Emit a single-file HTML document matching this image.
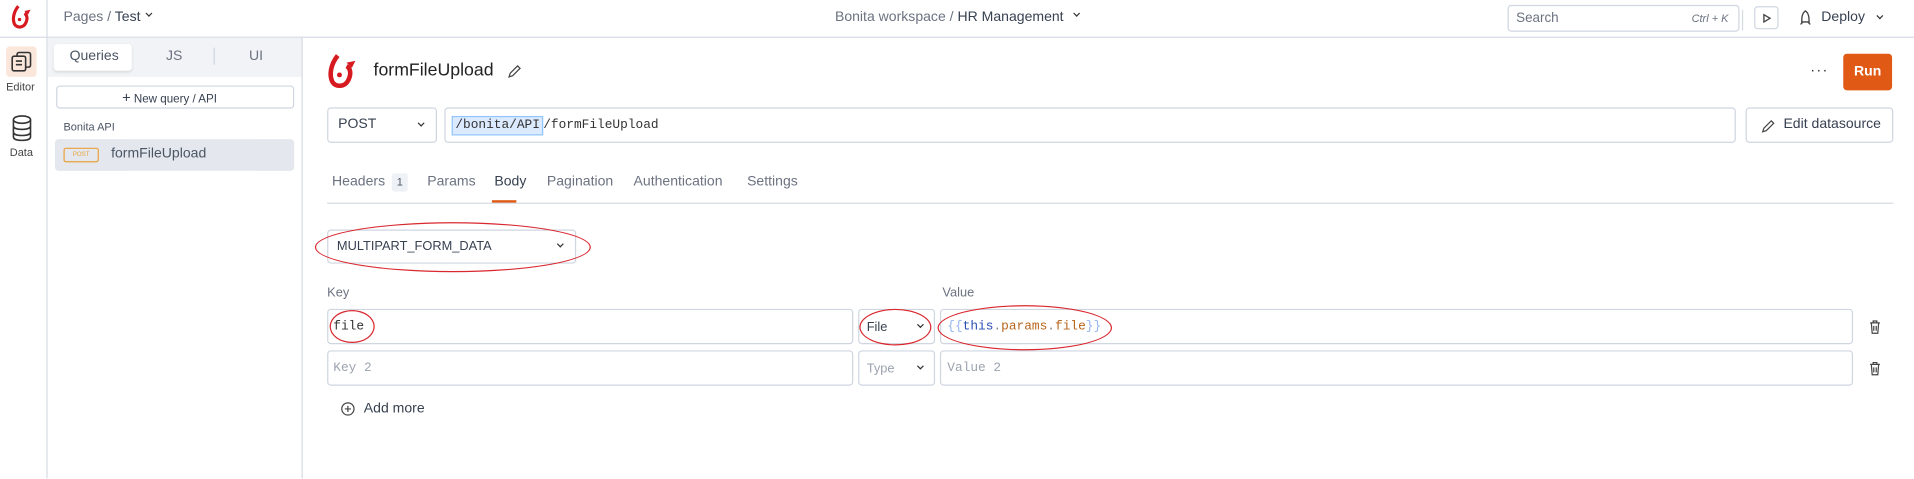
<!DOCTYPE html>
<html><head><meta charset="utf-8"><style>
*{box-sizing:border-box;margin:0;padding:0}
html,body{width:1914px;height:478px;overflow:hidden;background:#fff}
#s{position:absolute;left:0;top:0;width:1568px;height:392px;transform:scale(1.2207);transform-origin:0 0;font-family:"Liberation Sans",sans-serif;color:#4b5563;font-size:11px}
.a{position:absolute}
.box{position:absolute;border:1px solid #cfd6e0;border-radius:3px;background:#fff}
.mono{font-family:"Liberation Mono",monospace}
.ell{position:absolute;border:1px solid #d9282f;border-radius:50%}
.chev{position:absolute;width:5px;height:5px;border-right:1.3px solid #333;border-bottom:1.3px solid #333;transform:rotate(45deg)}
</style></head><body><div id="s">
<div class="a" style="left:0;top:30px;width:1568px;height:1px;background:#d5dbe3"></div>
<div class="a" style="left:38px;top:0;width:1px;height:392px;background:#d5dbe3"></div>
<svg class="a" style="left:9px;top:4px" width="18" height="20" viewBox="0 0 18 20"><path d="M6 1 C2 6 1 12 3 16 C5 19 10 19 12 15 C14 11 13 8 11 7" fill="none" stroke="#d71920" stroke-width="2.6"/><circle cx="7" cy="12" r="1.4" fill="#d71920"/><path d="M11 5 L16 4 L14 8" fill="#d71920"/></svg>
<div class="a" style="left:52px;top:8px;font-size:11.5px;color:#6b7280">Pages / <span style="color:#374151">Test</span></div>
<div class="chev" style="left:120px;top:9px;width:4px;height:4px"></div>
<div class="a" style="left:684px;top:8px;font-size:11.5px;color:#6b7280">Bonita workspace / <span style="color:#374151">HR Management</span></div>
<div class="chev" style="left:880px;top:9px;width:4px;height:4px"></div>
<div class="box" style="left:1235px;top:4px;width:190px;height:22px;border-radius:3px"><span class="a" style="left:6px;top:4px;font-size:11px;color:#6b7280">Search</span><span class="a" style="right:8px;top:5px;font-size:9px;font-style:italic;color:#6b7280">Ctrl + K</span></div>
<div class="a" style="left:1427px;top:8px;width:1px;height:17px;background:#d5dbe3"></div>
<div class="box" style="left:1437px;top:5px;width:20px;height:19px"><svg class="a" style="left:6px;top:5px" width="7" height="8"><path d="M1 1 L6 4 L1 7Z" fill="none" stroke="#444" stroke-width="1.1"/></svg></div>
<svg class="a" style="left:1473px;top:8px" width="12" height="13"><path d="M6 1 C3 3 3 7 3 10 L9 10 C9 7 9 3 6 1Z M2 12 L4 10 M10 12 L8 10" fill="none" stroke="#444" stroke-width="1.1"/></svg>
<div class="a" style="left:1492px;top:8px;color:#374151;font-size:11.5px">Deploy</div>
<div class="chev" style="left:1538px;top:11px;width:4px;height:4px"></div>
<div class="a" style="left:5px;top:38px;width:25px;height:25px;background:#fbe6dc;border-radius:3px"></div>
<svg class="a" style="left:9px;top:42px" width="18" height="18" viewBox="0 0 18 18" fill="none" stroke="#333" stroke-width="1.3"><rect x="5" y="1" width="11" height="12" rx="1.5"/><rect x="1" y="4" width="11" height="12" rx="1.5" fill="#fbe6dc"/><path d="M4 8h5M4 11h5"/></svg>
<div class="a" style="left:5px;top:66px;font-size:9px;color:#444">Editor</div>
<svg class="a" style="left:9px;top:94px" width="18" height="22" viewBox="0 0 18 22" fill="none" stroke="#333" stroke-width="1.3"><ellipse cx="9" cy="4" rx="7" ry="3"/><path d="M2 4v14c0 2 3 3 7 3s7-1 7-3V4M2 9c0 2 3 3 7 3s7-1 7-3M2 14c0 2 3 3 7 3s7-1 7-3"/></svg>
<div class="a" style="left:8px;top:120px;font-size:9px;color:#444">Data</div>
<div class="a" style="left:39px;top:31px;width:208px;height:32px;background:#f1f3f6"></div>
<div class="a" style="left:247px;top:31px;width:1px;height:361px;background:#d5dbe3"></div>
<div class="a" style="left:44px;top:36px;width:64px;height:22px;background:#fff;border-radius:3px;box-shadow:0 1px 2px rgba(0,0,0,.1)"></div>
<div class="a" style="left:57px;top:40px;font-size:11.5px;color:#4b5563">Queries</div>
<div class="a" style="left:136px;top:40px;font-size:11.5px;color:#6b7280">JS</div>
<div class="a" style="left:175px;top:39px;width:1px;height:14px;background:#cfd6e0"></div>
<div class="a" style="left:204px;top:40px;font-size:11.5px;color:#6b7280">UI</div>
<div class="box" style="left:46px;top:70px;width:195px;height:19px"></div>
<div class="a" style="left:100px;top:73px;font-size:9.5px;color:#374151"><b style="font-size:12px;font-weight:normal">+</b> New query / API</div>
<div class="a" style="left:52px;top:99px;font-size:9px;color:#4b5563">Bonita API</div>
<div class="a" style="left:45px;top:114px;width:196px;height:26px;background:#e4e8ee;border-radius:3px"></div>
<div class="a" style="left:52px;top:121px;width:29px;height:12px;border:1px solid #e8a23c;border-radius:2px;font-size:5px;color:#e8a23c;text-align:center;line-height:10px">POST</div>
<div class="a" style="left:91px;top:120px;font-size:11.5px;color:#4b5563">formFileUpload</div>
<svg class="a" style="left:268px;top:44px" width="26" height="29" viewBox="0 0 18 20"><path d="M6 1 C2 6 1 12 3 16 C5 19 10 19 12 15 C14 11 13 8 11 7" fill="none" stroke="#d71920" stroke-width="2.6"/><circle cx="7" cy="12" r="1.4" fill="#d71920"/><path d="M11 5 L16 4 L14 8" fill="#d71920"/></svg>
<div class="a" style="left:306px;top:50px;font-size:14.5px;color:#222">formFileUpload</div>
<svg class="a" style="left:416px;top:53px" width="11" height="11"><path d="M1 10 L2 7 L8 1 L10 3 L4 9Z" fill="none" stroke="#444" stroke-width="1"/></svg>
<div class="a" style="left:1483px;top:50px;font-size:12px;color:#333;letter-spacing:1px">···</div>
<div class="a" style="left:1510px;top:44px;width:40px;height:30px;background:#e05a16;border-radius:3px;color:#fff;font-size:11.5px;font-weight:bold;text-align:center;line-height:30px">Run</div>
<div class="box" style="left:268px;top:88px;width:90px;height:29px"><span class="a" style="left:8px;top:7px;font-size:11.5px;color:#374151">POST</span><div class="chev" style="left:74px;top:10px;width:4px;height:4px"></div></div>
<div class="box" style="left:364px;top:88px;width:1058px;height:29px"><span class="a mono" style="left:5px;top:6px;padding:1px 2px;background:#dbeafe;border:1px solid #93c5fd;font-size:10.5px;color:#333">/bonita/API</span><span class="a mono" style="left:80px;top:8px;font-size:10.5px;color:#333">/formFileUpload</span></div>
<div class="box" style="left:1430px;top:88px;width:121px;height:29px"><svg class="a" style="left:12px;top:9px" width="11" height="11"><path d="M1 10 L2 7 L8 1 L10 3 L4 9Z" fill="none" stroke="#444" stroke-width="1"/></svg><span class="a" style="left:30px;top:7px;font-size:11.5px;color:#374151">Edit datasource</span></div>
<div class="a" style="left:272px;top:143px;font-size:11.5px;color:#6b7280">Headers</div>
<div class="a" style="left:321px;top:142px;width:13px;height:15px;background:#eef1f5;border-radius:2px;font-size:9px;text-align:center;line-height:15px">1</div>
<div class="a" style="left:350px;top:143px;font-size:11.5px;color:#6b7280">Params</div>
<div class="a" style="left:405px;top:143px;font-size:11.5px;color:#374151">Body</div>
<div class="a" style="left:448px;top:143px;font-size:11.5px;color:#6b7280">Pagination</div>
<div class="a" style="left:519px;top:143px;font-size:11.5px;color:#6b7280">Authentication</div>
<div class="a" style="left:612px;top:143px;font-size:11.5px;color:#6b7280">Settings</div>
<div class="a" style="left:268px;top:166px;width:1283px;height:1px;background:#d5dbe3"></div>
<div class="a" style="left:403px;top:164px;width:20px;height:2px;background:#e05a16"></div>
<div class="box" style="left:268px;top:188px;width:204px;height:28px"><span class="a" style="left:7px;top:7px;color:#374151;font-size:10.5px">MULTIPART_FORM_DATA</span><div class="chev" style="left:188px;top:9px;width:4px;height:4px"></div></div>
<div class="ell" style="left:258px;top:182px;width:226px;height:41px"></div>
<div class="a" style="left:268px;top:234px;font-size:10.5px;color:#6b7280">Key</div>
<div class="a" style="left:772px;top:234px;font-size:10.5px;color:#6b7280">Value</div>
<div class="box" style="left:268px;top:253px;width:431px;height:29px"><span class="a mono" style="left:4px;top:8px;font-size:10.5px;color:#333">file</span></div>
<div class="box" style="left:703px;top:253px;width:63px;height:29px"><span class="a" style="left:6px;top:8px;font-size:10.5px;color:#374151">File</span><div class="chev" style="left:48px;top:10px;width:4px;height:4px"></div></div>
<div class="box" style="left:770px;top:253px;width:748px;height:29px"><span class="a mono" style="left:5px;top:8px;font-size:10.5px"><span style="color:#93b4f0">{{</span><span style="color:#2a4fb5">this</span><span style="color:#888">.</span><span style="color:#b8651c">params</span><span style="color:#888">.</span><span style="color:#b8651c">file</span><span style="color:#93b4f0">}}</span></span></div>
<div class="box" style="left:268px;top:287px;width:431px;height:29px"><span class="a mono" style="left:4px;top:8px;font-size:10.5px;color:#9ca3af">Key 2</span></div>
<div class="box" style="left:703px;top:287px;width:63px;height:29px"><span class="a" style="left:6px;top:8px;font-size:10.5px;color:#9ca3af">Type</span><div class="chev" style="left:48px;top:10px;width:4px;height:4px"></div></div>
<div class="box" style="left:770px;top:287px;width:748px;height:29px"><span class="a mono" style="left:5px;top:8px;font-size:10.5px;color:#9ca3af">Value 2</span></div>
<svg class="a" style="left:1531px;top:262px" width="10" height="12" fill="none" stroke="#444" stroke-width="1"><path d="M1 2.5h8M3.5 2.5V1h3v1.5M2 2.5l.7 8.5h4.6L8 2.5M4 5v4M6 5v4"/></svg>
<svg class="a" style="left:1531px;top:296px" width="10" height="12" fill="none" stroke="#444" stroke-width="1"><path d="M1 2.5h8M3.5 2.5V1h3v1.5M2 2.5l.7 8.5h4.6L8 2.5M4 5v4M6 5v4"/></svg>
<div class="ell" style="left:270px;top:254px;width:37px;height:27px"></div>
<div class="ell" style="left:704px;top:253px;width:59px;height:30px"></div>
<div class="ell" style="left:768px;top:250px;width:143px;height:37px"></div>
<svg class="a" style="left:279px;top:329px" width="12" height="12" fill="none" stroke="#444" stroke-width="1"><circle cx="6" cy="6" r="5"/><path d="M6 3.5v5M3.5 6h5"/></svg>
<div class="a" style="left:298px;top:329px;font-size:11.5px;color:#374151">Add more</div>
</div></body></html>
